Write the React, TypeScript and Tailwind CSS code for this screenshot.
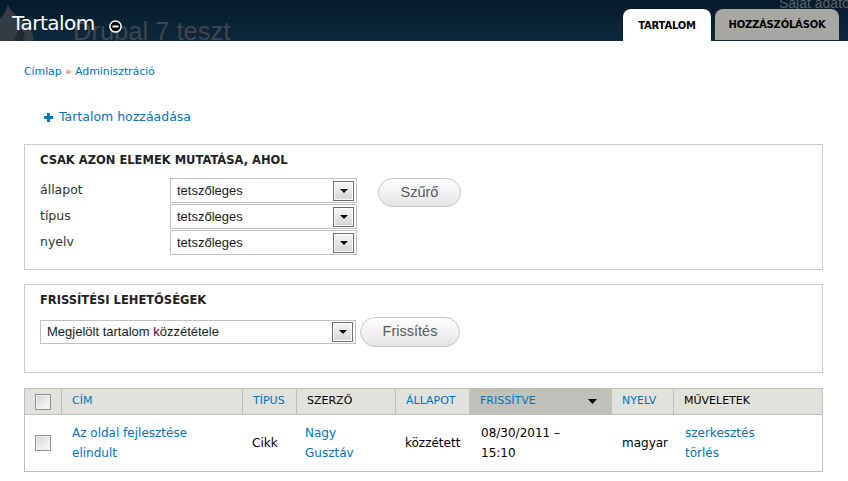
import React from "react";

const BLUE = "text-[#0074bd]";

const COLUMNS = [
  { label: "Cím", link: true, sorted: false },
  { label: "Típus", link: true, sorted: false },
  { label: "Szerző", link: false, sorted: false },
  { label: "Állapot", link: true, sorted: false },
  { label: "Frissítve", link: true, sorted: true },
  { label: "Nyelv", link: true, sorted: false },
  { label: "Műveletek", link: false, sorted: false },
];

function Checkbox() {
  return (
    <span className="block h-4 w-4 border border-[#8f9090] bg-gradient-to-br from-[#d6d6d6] to-[#fbfbfb] shadow-[inset_0_0_0_1px_#f2f2f2]" />
  );
}

function FakeSelect({ value, width, height }: { value: string; width: string; height: string }) {
  return (
    <div className={`flex items-center justify-between border border-[#c2c2c2] bg-white pl-[6px] pr-[2px] ${width} ${height}`}>
      <span className="font-['Liberation_Sans',Arial,sans-serif] text-[13px] text-[#1a1a1a]">{value}</span>
      <span className="flex h-[20px] w-[21px] items-center justify-center border border-[#6f6f6f] bg-gradient-to-b from-[#f6f6f6] to-[#d6d6d6] shadow-[inset_0_0_0_1px_#fdfdfd]">
        <svg width="8" height="4" viewBox="0 0 8 4">
          <path d="M0 0h8L4 4z" fill="#000" />
        </svg>
      </span>
    </div>
  );
}

function PillButton({ label, width, height }: { label: string; width: string; height: string }) {
  return (
    <button
      type="button"
      className={`flex items-center justify-center rounded-full border border-[#c6c6c6] bg-gradient-to-b from-white to-[#e4e4e4] font-['Liberation_Sans',Arial,sans-serif] text-[14.5px] text-[#5a5a5a] ${width} ${height}`}
    >
      {label}
    </button>
  );
}

function Header() {
  return (
    <header className="relative h-[41px] overflow-hidden bg-gradient-to-b from-[#051a2b] to-[#0c2a3c]">
      {/* faint site branding behind the overlay title */}
      <svg className="absolute left-[-14px] top-[4px]" width="54" height="48" viewBox="0 0 54 48">
        <path d="M22 0C24 8 34 14 42 22c8 8 8 22-4 26H8C-4 44-2 28 8 20 16 14 20 8 22 0z" fill="#313c45" />
        <path d="M34 26c4 0 6 4 4 8-2 4-6 6-8 6s-2-4 0-8 2-6 4-6z" fill="#1c2a35" />
      </svg>
      <span className="absolute left-[73px] top-[19px] whitespace-nowrap font-['Liberation_Sans',Arial,sans-serif] text-[25.5px] leading-none text-[#3f464e]">
        Drupal 7 teszt
      </span>
      <span className="absolute left-[779px] top-[-7px] whitespace-nowrap font-['Liberation_Sans',Arial,sans-serif] text-[14px] text-[#56636e]">
        Saját adatok
      </span>

      <div className="relative flex h-full items-end justify-between pl-3 pr-[9px]">
        <div className="flex h-full items-center">
          <h1 className="mt-[4px] text-[20px] leading-none tracking-[-0.5px] text-white">Tartalom</h1>
          <svg className="ml-[14px] mt-[11px]" width="13" height="13" viewBox="0 0 13 13">
            <circle cx="6.5" cy="6.5" r="5.6" fill="#000" stroke="#fff" strokeWidth="1.5" />
            <rect x="3.5" y="5.5" width="6" height="2" fill="#fff" />
          </svg>
        </div>
        <nav className="flex gap-1">
          <a className="flex h-[32px] w-[88px] items-center justify-center rounded-t-[8px] bg-white text-[10px] font-bold tracking-[-0.2px] text-black">
            TARTALOM
          </a>
          <a className="mb-px flex h-[31px] w-[124px] items-center justify-center rounded-t-[8px] bg-[#a8a8a3] text-[10px] font-bold tracking-[-0.2px] text-black">
            HOZZÁSZÓLÁSOK
          </a>
        </nav>
      </div>
    </header>
  );
}

function ContentTable() {
  return (
    <div className="mt-[15px] border border-[#bebfb9] text-[11px]">
      <div className="grid grid-cols-[36px_181px_54px_99px_74px_142px_62px_149px]">
        <div className="flex h-[26px] items-center border-b border-[#bebfb9] bg-[#e1e2dc] pl-[10px]">
          <Checkbox />
        </div>
        {COLUMNS.map((c) => (
          <div
            key={c.label}
            className={`flex h-[26px] items-center justify-between border-b border-l border-[#bebfb9] pl-[10px] pr-[14px] uppercase ${
              c.sorted ? "bg-[#c0c1bb]" : "bg-[#e1e2dc]"
            } ${c.link ? BLUE : "text-black"}`}
          >
            <span>{c.label}</span>
            {c.sorted && (
              <svg width="9" height="5" viewBox="0 0 9 5">
                <path d="M0 0h9L4.5 5z" fill="#000" />
              </svg>
            )}
          </div>
        ))}

        <div className="flex items-center py-2 pl-[10px]">
          <Checkbox />
        </div>
        <div className={`flex flex-col justify-center py-2 pl-[11px] text-[12px] leading-[20px] ${BLUE}`}>
          <span>Az oldal fejlesztése</span>
          <span>elindult</span>
        </div>
        <div className="flex items-center pl-[10px] text-[12px] text-black">Cikk</div>
        <div className={`flex flex-col justify-center pl-[9px] text-[12px] leading-[20px] ${BLUE}`}>
          <span>Nagy</span>
          <span>Gusztáv</span>
        </div>
        <div className="flex items-center pl-[10px] text-[12px] text-black">közzétett</div>
        <div className="flex flex-col justify-center pl-[12px] text-[12px] leading-[20px] text-black">
          <span>08/30/2011 –</span>
          <span>15:10</span>
        </div>
        <div className="flex items-center pl-[11px] text-[12px] text-black">magyar</div>
        <div className={`flex flex-col justify-center pl-[12px] text-[12px] leading-[20px] ${BLUE}`}>
          <span>szerkesztés</span>
          <span>törlés</span>
        </div>
      </div>
    </div>
  );
}

export default function App() {
  return (
    <div className="h-[481px] w-[848px] overflow-hidden bg-white font-['DejaVu_Sans',Verdana,sans-serif] text-[#222]">
      <Header />

      <main className="pl-[24px] pr-[25px]">
        <p className={`mt-[24px] text-[11px] leading-[14px] tracking-[-0.1px] ${BLUE}`}>
          <a>Címlap</a> <span className="text-[#b36b1f]">»</span> <a>Adminisztráció</a>
        </p>

        <a className={`ml-[20px] mt-[30px] flex items-center gap-[6px] text-[12.5px] leading-[16px] ${BLUE}`}>
          <svg width="9" height="9" viewBox="0 0 9 9">
            <path d="M3 0h3v3h3v3H6v3H3V6H0V3h3z" fill="#0074bd" />
          </svg>
          Tartalom hozzáadása
        </a>

        <section className="mt-[19px] border border-[#cccccc] px-[15px] pb-[14px] pt-2">
          <h2 className="text-[11.5px] font-bold uppercase leading-[14px] text-[#222]">
            Csak azon elemek mutatása, ahol
          </h2>
          <div className="mt-[11px] flex items-start">
            <div className="flex flex-col gap-px">
              {["állapot", "típus", "nyelv"].map((l) => (
                <div key={l} className="flex items-center">
                  <span className="w-[130px] text-[12.5px] text-[#333]">{l}</span>
                  <FakeSelect value="tetszőleges" width="w-[187px]" height="h-[25px]" />
                </div>
              ))}
            </div>
            <div className="ml-[21px]">
              <PillButton label="Szűrő" width="w-[83px]" height="h-[29px]" />
            </div>
          </div>
        </section>

        <section className="mt-[14px] border border-[#cccccc] px-[15px] pb-[25px] pt-2">
          <h2 className="text-[11.5px] font-bold uppercase leading-[14px] text-[#222]">
            Frissítési lehetőségek
          </h2>
          <div className="mt-[10px] flex items-center">
            <FakeSelect value="Megjelölt tartalom közzététele" width="w-[316px]" height="h-[24px]" />
            <div className="ml-[4px]">
              <PillButton label="Frissítés" width="w-[100px]" height="h-[30px]" />
            </div>
          </div>
        </section>

        <ContentTable />
      </main>
    </div>
  );
}
